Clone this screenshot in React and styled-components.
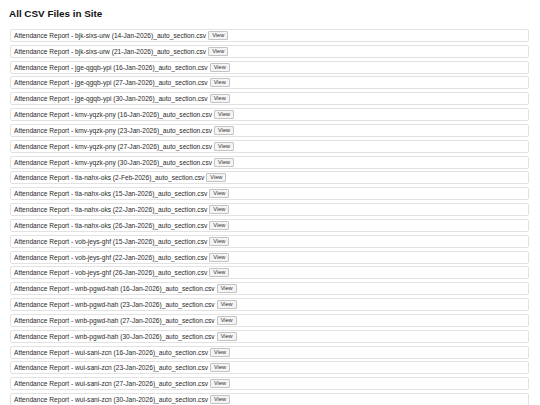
import React from "react";
import styled, { createGlobalStyle } from "styled-components";

const Global = createGlobalStyle`
  html, body { margin: 0; padding: 0; background: #fff; }
  body { font-family: "Liberation Sans", Arial, sans-serif; color: #222; }
`;

const Page = styled.div`
  padding: 7px 11px 0 9px;
`;

const Title = styled.h1`
  margin: 0 0 8px 0;
  font-size: 9.9px;
  font-weight: bold;
  line-height: 14px;
  color: #111;
`;

const List = styled.div`
  display: flex;
  flex-direction: column;
  gap: 2.83px;
  padding-left: 1px;
`;

const Row = styled.div`
  display: flex;
  align-items: center;
  height: 13px;
  box-sizing: border-box;
  border: 1px solid #e2e2e2;
  border-radius: 2px;
  padding: 0 3px;
  font-size: 6.62px;
  color: #2a2a2a;
  white-space: nowrap;
`;

const ViewButton = styled.button`
  margin-left: 2px;
  height: 9px;
  padding: 0 3px;
  font-family: "Liberation Sans", Arial, sans-serif;
  font-size: 5.6px;
  line-height: 7px;
  color: #333;
  background: #f4f4f4;
  border: 1px solid #c4c4c4;
  border-radius: 1px;
`;

const files = [
  "bjk-sixs-urw (14-Jan-2026)",
  "bjk-sixs-urw (21-Jan-2026)",
  "jge-qgqb-ypi (16-Jan-2026)",
  "jge-qgqb-ypi (27-Jan-2026)",
  "jge-qgqb-ypi (30-Jan-2026)",
  "kmv-yqzk-pny (16-Jan-2026)",
  "kmv-yqzk-pny (23-Jan-2026)",
  "kmv-yqzk-pny (27-Jan-2026)",
  "kmv-yqzk-pny (30-Jan-2026)",
  "tia-nahx-oks (2-Feb-2026)",
  "tia-nahx-oks (15-Jan-2026)",
  "tia-nahx-oks (22-Jan-2026)",
  "tia-nahx-oks (26-Jan-2026)",
  "vob-jeys-ghf (15-Jan-2026)",
  "vob-jeys-ghf (22-Jan-2026)",
  "vob-jeys-ghf (26-Jan-2026)",
  "wnb-pgwd-hah (16-Jan-2026)",
  "wnb-pgwd-hah (23-Jan-2026)",
  "wnb-pgwd-hah (27-Jan-2026)",
  "wnb-pgwd-hah (30-Jan-2026)",
  "wui-sani-zcn (16-Jan-2026)",
  "wui-sani-zcn (23-Jan-2026)",
  "wui-sani-zcn (27-Jan-2026)",
  "wui-sani-zcn (30-Jan-2026)",
];

export default function App() {
  return (
    <Page>
      <Global />
      <Title>All CSV Files in Site</Title>
      <List>
        {files.map((f) => (
          <Row key={f}>
            Attendance Report - {f}_auto_section.csv
            <ViewButton>View</ViewButton>
          </Row>
        ))}
      </List>
    </Page>
  );
}
